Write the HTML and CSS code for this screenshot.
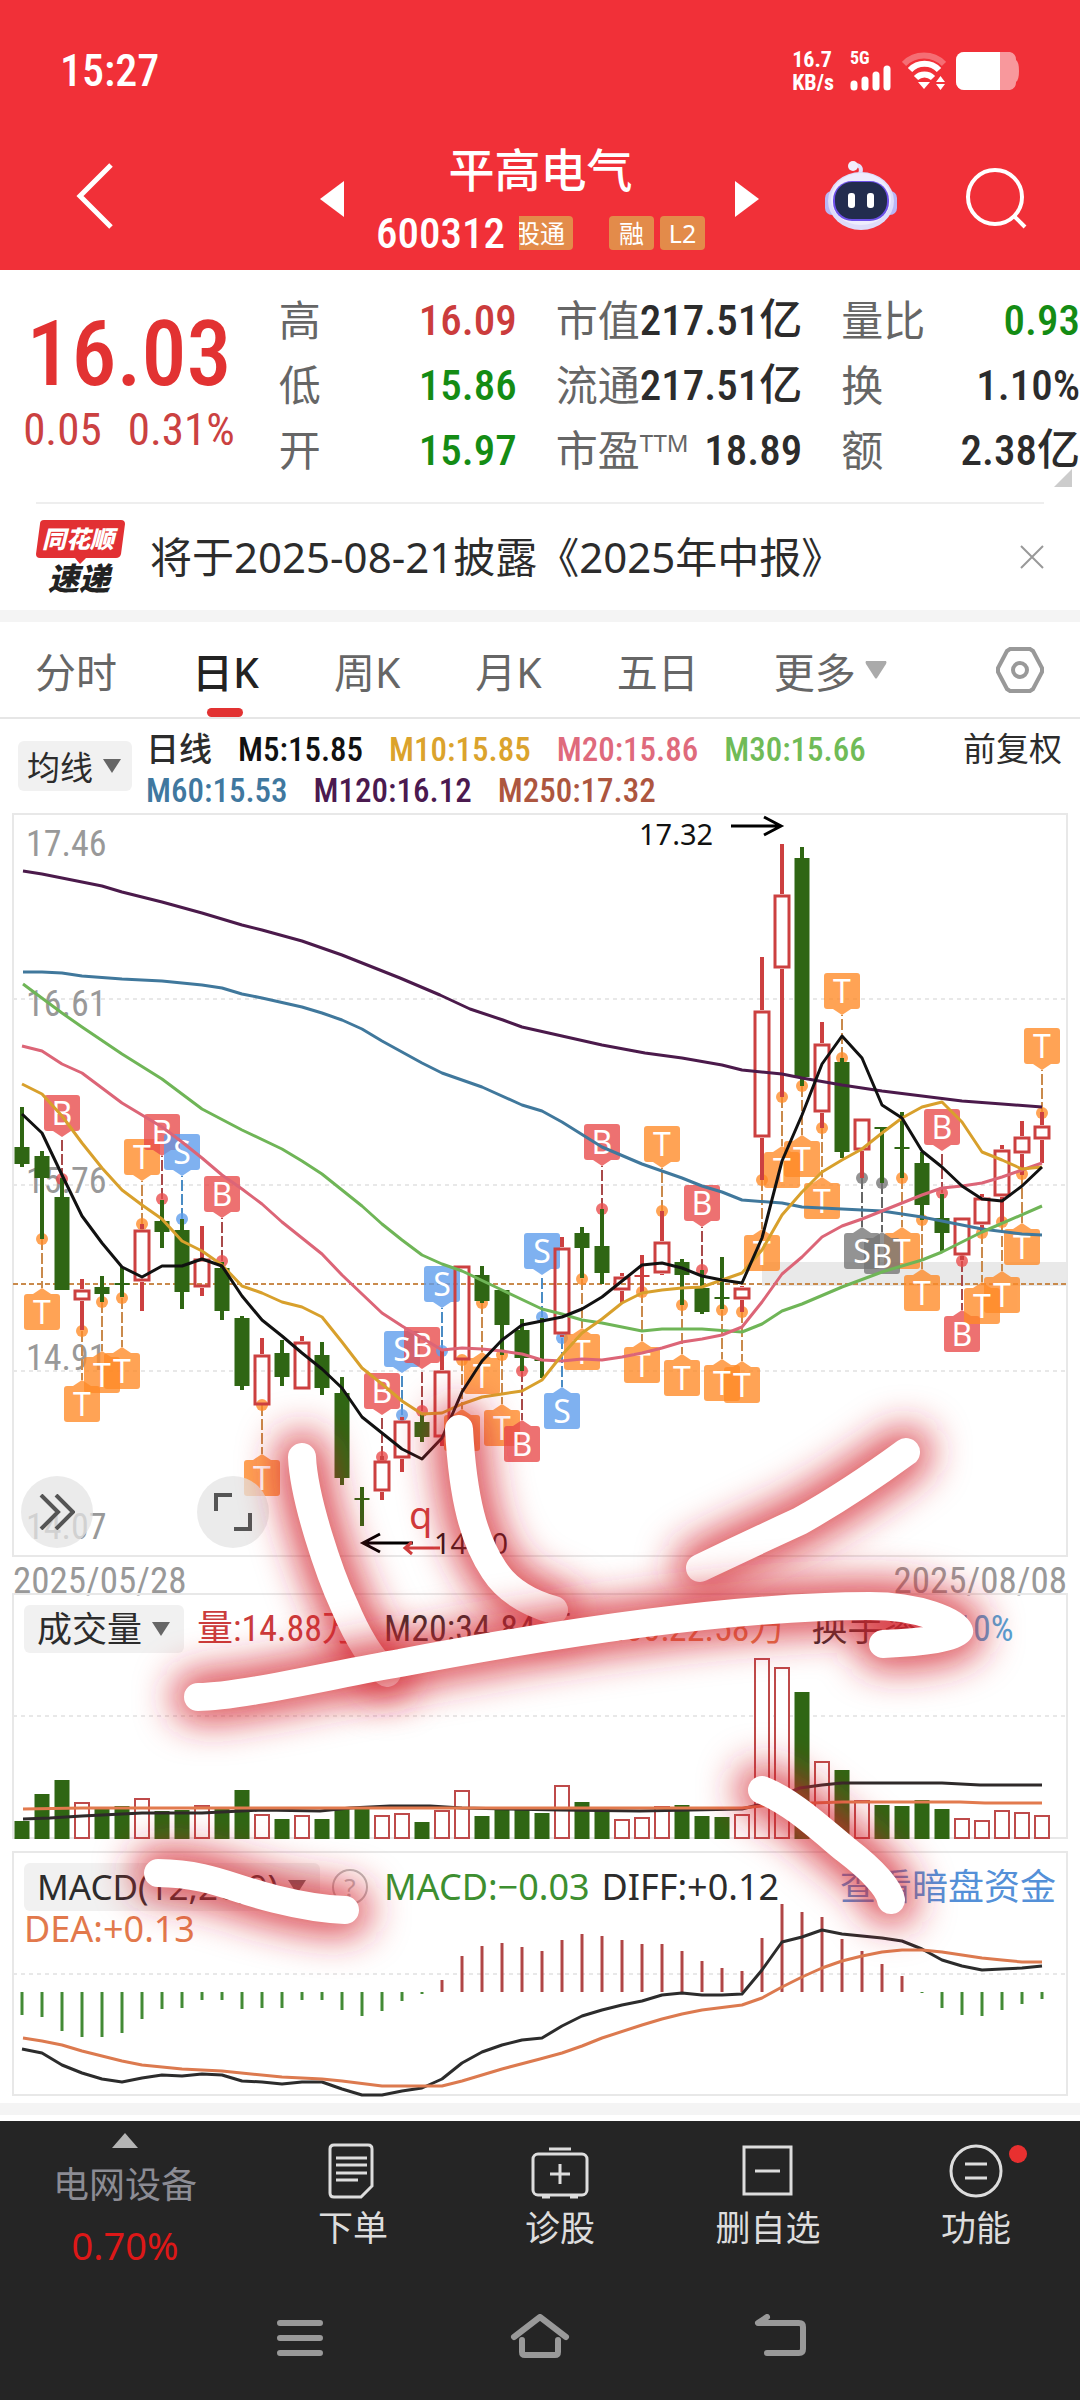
FILE: index.html
```html
<!DOCTYPE html>
<html lang="zh-CN">
<head>
<meta charset="utf-8">
<meta name="viewport" content="width=device-width, initial-scale=1">
<title>平高电气 600312</title>
<link rel="stylesheet" href="styles.css">
</head>
<body>
<header class="top">
  <div class="status">
    <span class="clock">15:27</span>
    <div class="signals">
      <span class="speed">16.7<br>KB/s</span>
      <div class="cell">
        <span>5G</span>
        <svg width="42" height="26" viewBox="0 0 42 26" stroke="#fff" stroke-width="7" stroke-linecap="round"><path d="M4 19v3M15 15v7M26 10v12M37 4v18"/></svg>
      </div>
      <svg class="wifi" width="44" height="38" viewBox="0 0 44 38" fill="none" stroke="#fff" stroke-width="6">
        <path d="M2 12a28 28 0 0 1 40 0" opacity=".3"/><path d="M8 18a20 20 0 0 1 29 0"/><path d="M14 26a12 12 0 0 1 17 0"/>
        <path d="M16 30h12l-6 7z" fill="#fff" stroke="none"/><path d="M34 30h9l-4.500-6zM34 32h9l-4.500 6z" fill="#fff" stroke="none"/>
      </svg>
      <svg width="64" height="38" viewBox="0 0 64 38"><path d="M8 0h46a8 8 0 0 1 6 8q3 2 3 11t-3 11a8 8 0 0 1-6 8H8a8 8 0 0 1-8-8V8a8 8 0 0 1 8-8z" fill="#fff" opacity=".5"/><path d="M8 0h36v38H8a8 8 0 0 1-8-8V8a8 8 0 0 1 8-8z" fill="#fff"/></svg>
    </div>
  </div>
  <div class="titlebar">
    <button class="icon-btn back" aria-label="返回"><svg width="40" height="66" viewBox="0 0 40 66" fill="none" stroke="#fff" stroke-width="5"><path d="M36 2L5 33l31 31"/></svg></button>
    <button class="icon-btn prev" aria-label="上一只"><svg width="24" height="36" viewBox="0 0 24 36"><path d="M24 0v36L0 18z" fill="#fff"/></svg></button>
    <div class="stock">
      <h1>平高电气</h1>
      <div class="code"><span>600312</span><div class="tags"><i class="cut"><b>股通</b></i><i class="tag">融</i><i class="tag">L2</i></div></div>
    </div>
    <button class="icon-btn next" aria-label="下一只"><svg width="24" height="36" viewBox="0 0 24 36"><path d="M0 0v36l24-18z" fill="#fff"/></svg></button>
    <button class="icon-btn robot" aria-label="智能助手">
      <svg width="72" height="70" viewBox="0 0 72 70">
        <path d="M35 13q3-8-4-9" fill="none" stroke="#e4e0fb" stroke-width="4"/><circle cx="28" cy="5" r="5" fill="#f3effd"/>
        <rect x="0" y="30" width="14" height="24" rx="7" fill="#b9b6f5"/><rect x="58" y="30" width="14" height="24" rx="7" fill="#b9b6f5"/>
        <ellipse cx="36" cy="40" rx="33" ry="29" fill="#dedcfa"/><ellipse cx="36" cy="38" rx="30" ry="26" fill="#eeecfd"/>
        <rect x="8" y="20" width="56" height="40" rx="19" fill="#6d50e8"/><rect x="10" y="21" width="52" height="37" rx="17" fill="#222c4e"/>
        <rect x="23" y="32" width="7" height="15" rx="3" fill="#fff"/><rect x="42" y="32" width="7" height="15" rx="3" fill="#fff"/>
      </svg>
    </button>
    <button class="icon-btn search" aria-label="搜索"><svg width="62" height="62" viewBox="0 0 62 62" fill="none" stroke="#fff" stroke-width="4"><circle cx="30" cy="30" r="27"/><path d="M49 49l11 11"/></svg></button>
  </div>
</header>

<main>
<section class="quote">
  <div class="price"><strong>16.03</strong><p><span>0.05</span><span>0.31%</span></p></div>
  <dl>
    <div><dt>高</dt><dd class="up">16.09</dd></div>
    <div><dt>低</dt><dd class="down">15.86</dd></div>
    <div><dt>开</dt><dd class="down">15.97</dd></div>
  </dl>
  <dl>
    <div><dt>市值</dt><dd>217.51亿</dd></div>
    <div><dt>流通</dt><dd>217.51亿</dd></div>
    <div><dt>市盈<sup>TTM</sup></dt><dd>18.89</dd></div>
  </dl>
  <dl>
    <div><dt>量比</dt><dd class="down">0.93</dd></div>
    <div><dt>换</dt><dd>1.10%</dd></div>
    <div><dt>额</dt><dd>2.38亿</dd></div>
  </dl>
  <i class="corner"></i>
</section>

<section class="news">
  <svg width="90" height="74" viewBox="0 0 90 74" class="brand" role="img" aria-label="同花顺速递">
    <path d="M8 0h77q4 0 4 4l-4 30q-1 4-5 4H50l-6 6-5-6H4q-4 0-4-4L4 4q0-4 4-4z" fill="#e23033"/>
    <text x="42" y="28" class="b1">同花顺</text><text x="43" y="70" class="b2">速递</text>
  </svg>
  <a href="#report">将于2025-08-21披露《2025年中报》</a>
  <button class="icon-btn" aria-label="关闭"><svg width="24" height="24" viewBox="0 0 24 24" stroke="#999" stroke-width="2"><path d="M1 1l22 22M23 1L1 23"/></svg></button>
</section>

<nav class="tabs">
  <button>分时</button><button class="on">日K</button><button>周K</button><button>月K</button><button>五日</button>
  <button class="more">更多<svg width="22" height="18" viewBox="0 0 22 18"><path d="M1 0h20q1 1 0 3L12 17q-1 1-2 0L1 3q-1-2 0-3z" fill="#aaa"/></svg></button>
  <button class="set" aria-label="设置"><svg width="50" height="46" viewBox="0 0 50 46" fill="none" stroke="#999" stroke-width="4"><path d="M15 2h20l3 2 9 17v4l-9 17-3 2H15l-3-2L3 25v-4l9-17z"/><circle cx="25" cy="23" r="7"/></svg></button>
</nav>

<section class="legend">
  <button class="pill">均线<i class="caret"></i></button>
  <ul>
    <li>日线</li><li class="m5">M5:15.85</li><li class="m10">M10:15.85</li><li class="m20">M20:15.86</li><li class="m30">M30:15.66</li>
    <li class="m60">M60:15.53</li><li class="m120">M120:16.12</li><li class="m250">M250:17.32</li>
  </ul>
  <button class="plain">前复权</button>
</section>

<section class="charts">
  <div class="panel">
    <svg id="kline" viewBox="0 813 1080 744"></svg>
    <div class="tools">
      <button aria-label="展开"><svg width="36" height="36" viewBox="0 0 36 36" fill="none" stroke="#555" stroke-width="4"><path d="M2 1l17 17L2 35M17 1l17 17-17 17"/></svg></button>
      <button aria-label="全屏"><svg width="38" height="38" viewBox="0 0 38 38" fill="none" stroke="#555" stroke-width="4"><path d="M2 18V2h16M36 20v16H20"/></svg></button>
    </div>
  </div>
  <div class="dates"><time>2025/05/28</time><time>2025/08/08</time></div>
  <div class="panel">
    <svg id="volume" viewBox="0 1593 1080 258"></svg>
    <div class="heads">
      <div class="head vol"><button class="pill">成交量<i class="caret"></i></button>
      <span class="up">量:14.88万</span><span>M20:34.84万</span><span class="orange">M60:22.58万</span><span>换手率:<em>1.10%</em></span></div>
    </div>
  </div>
  <div class="panel">
    <svg id="macd" viewBox="0 1851 1080 252"></svg>
    <div class="heads">
      <div class="head mac"><button class="pill">MACD(12,26,9)<i class="caret"></i></button>
      <svg width="36" height="36" viewBox="0 0 36 36"><circle cx="18" cy="18" r="17" fill="none" stroke="#bbb" stroke-width="2"/><text x="18" y="28">?</text></svg>
      <span class="green">MACD:−0.03</span><span>DIFF:+0.12</span><a href="#fund">查看暗盘资金</a></div>
      <span class="dea">DEA:+0.13</span>
    </div>
  </div>
  <svg class="ink" viewBox="0 813 1080 1290" id="ink" aria-hidden="true"></svg>
</section>
</main>

<footer>
  <div class="actions">
    <button class="sector"><svg width="26" height="15" viewBox="0 0 26 15"><path d="M13 0l13 15H0z" fill="#b5b5b5"/></svg><span>电网设备</span><strong>0.70%</strong></button>
    <button><svg width="58" height="56" viewBox="0 0 58 56"><path d="M10 2h34q4 0 4 4v37L37 54H10q-4 0-4-4V6q0-4 4-4zM12 15h31M12 22h31M12 30h31M12 37h22"/></svg>下单</button>
    <button><svg width="58" height="56" viewBox="0 0 58 56"><rect x="2" y="11" width="54" height="41" rx="5"/><path d="M18 6h22M29 21v20M19 31h20"/><path d="M11 54h8M39 54h8"/></svg>诊股</button>
    <button><svg width="58" height="56" viewBox="0 0 58 56"><rect x="5" y="4" width="47" height="47"/><path d="M16 28h25"/></svg>删自选</button>
    <button><svg width="58" height="56" viewBox="0 0 58 56"><circle cx="29" cy="28" r="25"/><path d="M18 21h22M18 35h22"/></svg>功能<i class="dot"></i></button>
  </div>
  <div class="sysnav">
    <button aria-label="最近"><svg width="60" height="46" viewBox="0 0 60 46"><path d="M10 9h40M10 24h40M10 39h40"/></svg></button>
    <button aria-label="主页"><svg width="60" height="46" viewBox="0 0 60 46"><path d="M4 23L30 3l26 20M12 26v12q0 3 3 3h30q3 0 3-3V26" /></svg></button>
    <button aria-label="返回"><svg width="60" height="46" viewBox="0 0 60 46"><path d="M17 3L8 9h41q4 0 4 4v22q0 4-4 4H17"/></svg></button>
  </div>
</footer>
<script src="chart.js"></script>
</body>
</html>
```

FILE: styles.css
```css
:root {
  --num: "Roboto Condensed", "Liberation Sans Narrow", Roboto, "Noto Sans CJK SC", sans-serif;
  --text: "Noto Sans", "Noto Sans CJK SC", sans-serif;
  --red: #e23232;
  --ink: #2c2c2c;
}
* { box-sizing: border-box; }
body { margin: 0; background: #fff; color: var(--ink); font-family: var(--text); }
button { border: 0; padding: 0; background: none; color: inherit; font: inherit; white-space: nowrap; }
a { color: inherit; text-decoration: none; }
i { font-style: normal; }
svg { display: block; flex: none; }
h1, p, dl, dd, ul { margin: 0; padding: 0; }

.top { background: #f13038; color: #fff; height: 270px; padding-top: 45px; }
.status { display: flex; justify-content: space-between; align-items: center; height: 52px; padding: 0 60px; }
.clock { font: 500 44px/52px var(--num); }
.signals { display: flex; align-items: center; gap: 10px; }
.speed { font: 700 22px/23px var(--num); margin-right: 6px; }
.cell { font: 700 18px/14px var(--num); display: grid; gap: 0; }
.titlebar { display: grid; grid-template-columns: 320px 26px 1fr 26px 64px 76px 64px 62px 53px; align-items: start; padding-top: 44px; }
.back { padding-left: 75px; margin-top: 22px; }
.prev, .next { margin-top: 40px; }
.robot { grid-column: 6; margin-top: 20px; }
.search { grid-column: 8; margin-top: 26px; }
.stock { text-align: center; }
.stock h1 { font: 500 46px/56px var(--text); }
.code { display: flex; justify-content: center; align-items: center; gap: 14px; margin-top: 6px; font: 500 43px/60px var(--num); }
.tags { display: flex; gap: 6px; font: 25px/34px var(--text); }
.tags i { height: 34px; background: #e38b4a; border-radius: 4px; white-space: nowrap; }
.tags .cut { width: 54px; display: flex; justify-content: flex-end; overflow: hidden; border-radius: 0 4px 4px 0; padding-right: 8px; margin-right: 30px; }
.tags b { font-weight: 400; }
.tag { width: 45px; }

.quote { position: relative; display: grid; grid-template-columns: 242fr 240fr 240fr 241fr; column-gap: 39px; height: 232px; padding-top: 17px; }
.price { color: var(--red); font-family: var(--num); padding-left: 18px; text-align: center; }
.price strong { display: block; font-size: 90px; font-weight: 500; line-height: 100px; margin-top: 18px; }
.price p { display: flex; justify-content: center; gap: 26px; color: #cb4141; font-size: 45px; line-height: 48px; margin-top: 1px; }
.quote dl div { display: flex; justify-content: space-between; align-items: center; height: 65px; white-space: nowrap; }
.quote dt { color: #666; font-size: 42px; line-height: 60px; }
.quote sup { font-size: 24px; line-height: 0; vertical-align: 14px; }
.quote dd { font: 500 43px/60px var(--num); }
.up { color: #cb3c3c; }
.quote .down { color: #148c14; }
.corner { position: absolute; right: 8px; bottom: 15px; border: solid transparent; border-width: 0 0 18px 18px; border-bottom-color: #ccc; }

.news { display: flex; align-items: center; margin: 0 36px; height: 108px; border-top: 2px solid #eee; }
.news a { flex: 1; padding-left: 24px; font-size: 42px; line-height: 60px; }
.brand text { font-family: "Noto Sans CJK SC", sans-serif; font-weight: 900; font-style: italic; text-anchor: middle; }
.b1 { font-size: 24px; fill: #fff; }
.b2 { font-size: 31px; fill: #222; }

.tabs { display: flex; gap: 75px; height: 109px; padding: 0 35px; border-top: 12px solid #f4f4f4; border-bottom: 2px solid #e6e6e6; color: #666; font-size: 41px; }
.tabs button { display: flex; align-items: center; position: relative; }
.tabs .on { color: #222; font-weight: 500; }
.tabs .on::after { content: ""; position: absolute; left: 50%; bottom: 0; width: 36px; height: 9px; margin-left: -18px; border-radius: 5px; background: var(--red); }
.tabs .more { gap: 9px; }
.tabs .set { margin-left: auto; }

.legend { display: flex; height: 94px; padding: 10px 18px 0; font-size: 33px; }
.pill { display: flex; align-items: center; gap: 10px; background: #f1f1f1; border-radius: 6px; }
.legend .pill { height: 50px; padding: 0 11px 0 9px; margin-top: 12px; }
.caret { border: solid transparent; border-width: 14px 9px 0; border-top-color: #666; }
.legend ul { flex: 1; display: flex; flex-wrap: wrap; column-gap: 26px; margin-left: 14px; list-style: none; font: 500 33px/41px var(--num); align-content: flex-start; }
.m5 { color: #111; } .m10 { color: #dba32c; } .m20 { color: #df6a7c; } .m30 { color: #70bb57; }
.m60 { color: #40789f; } .m120 { color: #4b1a4f; } .m250 { color: #ad563f; }
.plain { align-self: flex-start; line-height: 40px; }

.charts { position: relative; border-bottom: 12px solid #f4f4f4; margin-bottom: 6px; }
.panel { position: relative; }
.panel > svg { width: 100%; height: auto; }
.tools { position: absolute; left: 21px; bottom: 9px; display: flex; gap: 104px; }
.tools button { width: 72px; height: 72px; border-radius: 50%; background: rgba(228, 228, 228, .75); display: grid; place-items: center; }
.dates { display: flex; justify-content: space-between; height: 36px; padding: 0 13px; color: #999; font: 37px/48px var(--num); }
.heads { position: absolute; inset: 12px 24px auto 24px; }
.head { display: flex; align-items: center; white-space: nowrap; font: 36px/48px var(--num); }
.head .pill { font-family: var(--text); height: 48px; padding: 0 14px 0 13px; font-size: 35px; }
.vol { gap: 13px; }
.vol em { font-style: normal; color: #52a3d6; }
.vol span + span { margin-left: 13px; }
.orange, .dea { color: #e2794c; }
.mac { gap: 12px; font-family: var(--text); }
.mac text { font: 26px var(--text); fill: #bbb; text-anchor: middle; }
.mac .green { color: #3d8f30; margin-left: 4px; }
.mac a { color: #5490d8; margin-left: auto; }
.dea { display: block; font: 36px/36px var(--text); }
.ink { position: absolute; inset: 0; width: 100%; height: auto; pointer-events: none; }

.axis { font: 36px var(--num); fill: #999; }
.mark { font: 32px var(--text); fill: #fff; text-anchor: middle; }
.note { font: 29px var(--text); fill: #111; }
.q { font: 38px var(--text); fill: #cf3c3c; }

footer { background: #252525; color: #ddd; height: 279px; }
.actions { display: grid; grid-template-columns: 250fr 206fr 208fr 208fr 208fr; height: 168px; }
.actions button { position: relative; display: flex; flex-direction: column; align-items: center; padding-top: 22px; font-size: 35px; line-height: 58px; }
.actions svg { fill: none; stroke: #ddd; stroke-width: 3; }
.actions .sector { padding-top: 12px; color: #8c8c94; line-height: 60px; font-size: 36px; }
.actions .sector svg { stroke: none; margin-bottom: 7px; }
.sector strong { color: #dd1818; font-weight: 400; font-size: 38px; }
.dot { position: absolute; top: 24px; right: 53px; width: 18px; height: 18px; border-radius: 50%; background: #e83030; }
.sysnav { display: flex; justify-content: center; gap: 180px; padding-top: 25px; }
.sysnav svg { fill: none; stroke: #999; stroke-width: 6; stroke-linecap: round; stroke-linejoin: round; }
```

FILE: chart.js
```js
const X = i => 22 + 20 * i;
const RED = '#cc4040', GREEN = '#2f6613';
const put = (id, html) => { document.getElementById(id).innerHTML = html; };
const frame = (y, h, grids) => `<rect x="13" y="${y}" width="1054" height="${h}" fill="none" stroke="#e8e8e8" stroke-width="2"/>` +
  grids.map(g => `<path d="M13 ${g}H1066" stroke="#e8e8e8" stroke-width="2" stroke-dasharray="4 4"/>`).join('');
const line = (pts, c, w = 3) => `<polyline points="${pts}" fill="none" stroke="${c}" stroke-width="${w}" stroke-linejoin="round"/>`;
// y values for consecutive days
const daily = ys => ys.map((y, i) => `${X(i)},${y}`).join(' ');

// direction, high, body top, body bottom, low
const candles = `G 1107 1147 1164 1167|G 1151 1156 1178 1239|G 1178 1197 1290 1290|R 1279 1289 1301 1330|G 1276 1287 1294 1302|G 1267 1283 1285 1297|R 1224 1229 1282 1311|G 1200 1221 1232 1248|G 1219 1230 1292 1309|R 1226 1258 1288 1296|G 1262 1268 1311 1320|G 1316 1318 1386 1390|R 1338 1354 1406 1406|G 1340 1353 1377 1386|R 1336 1341 1390 1390|G 1342 1355 1388 1395|G 1377 1393 1478 1485|G 1487 1498 1500 1526|R 1456 1460 1492 1500|R 1417 1420 1459 1472|G 1413 1422 1437 1442|R 1350 1370 1438 1446|R 1265 1265 1361 1361|G 1266 1275 1301 1303|G 1290 1290 1325 1355|G 1319 1330 1358 1371|G 1318 1359 1361 1378|R 1237 1247 1335 1337|G 1227 1233 1248 1278|G 1209 1246 1273 1284|R 1273 1276 1291 1303|R 1255 1275 1277 1292|R 1211 1241 1274 1275|G 1259 1262 1275 1305|G 1270 1288 1312 1314|G 1257 1297 1299 1309|R 1286 1287 1300 1312|R 957 1010 1138 1180|R 844 894 969 1097|G 847 858 1077 1086|R 1022 1043 1113 1128|G 1058 1062 1152 1158|R 1118 1118 1151 1178|G 1127 1127 1129 1183|G 1112 1147 1149 1178|G 1152 1163 1205 1220|G 1194 1218 1233 1252|R 1217 1217 1256 1260|R 1194 1197 1225 1233|R 1145 1149 1197 1222|R 1121 1136 1154 1175|R 1112 1125 1140 1163`
  .split('|').map(s => { const [d, ...v] = s.split(' '); return [d, ...v.map(Number)]; });
const candle = ([d, h, t, b, l], i) => {
  const x = X(i), c = d === 'R' ? RED : GREEN;
  const wick = `<path d="M${x} ${h}V${t}M${x} ${b}V${l}" stroke="${c}" stroke-width="4"/>`;
  if (d === 'G' || b - t < 4) return wick + `<rect x="${x - 7.5}" y="${t}" width="15" height="${b - t}" fill="${c}"/>`;
  return wick + `<rect x="${x - 7}" y="${t + 2}" width="14" height="${b - t - 4}" fill="none" stroke="${c}" stroke-width="3"/>`;
};

// day, letter, top of the box, y of the dot, grey flag
const marks = [[1,'T',1294,1239],[2,'B',1095,1179],[3,'T',1386,1331],[4,'T',1357,1302],[5,'T',1353,1298],[6,'T',1139,1224],[7,'B',1114,1199],[8,'S',1134,1219],[10,'B',1176,1261],[12,'T',1460,1405],[18,'B',1373,1457],[19,'S',1331,1415],[20,'B',1327,1411],[21,'S',1266,1351],[22,'T',1415,1360],[23,'T',1358,1303],[24,'T',1410,1355],[25,'B',1426,1371],[26,'S',1233,1317],[27,'S',1393,1338],[28,'T',1334,1279],[29,'B',1124,1209],[31,'T',1347,1292],[32,'T',1126,1211],[33,'T',1360,1305],[34,'B',1185,1270],[35,'T',1365,1310],[36,'T',1367,1312],[37,'T',1235,1180],[38,'T',1152,1097],[39,'T',1141,1086],[40,'T',1183,1128],[41,'T',973,1058],[44,'T',1233,1178],[42,'S',1233,1178,1],[43,'B',1238,1183,1],[45,'T',1275,1220],[46,'B',1109,1193],[47,'B',1316,1261],[48,'T',1288,1233],[49,'T',1277,1222],[50,'T',1229,1174],[51,'T',1028,1113]];
const tint = { T: ['#ff8a26', '#c98a4c'], B: ['#e94a4a', '#a84a4a'], S: ['#5c9cec', '#4a8cc4'] };
const mark = ([i, k, t, dot, grey]) => {
  const x = X(i), [c, d] = grey ? ['#757575', '#666'] : tint[k];
  const above = t < dot;
  const tip = above ? `M${x - 9} ${t + 36}h18l-9 6z` : `M${x - 9} ${t}h18l-9-6z`;
  const from = above ? t + 42 : t - 6;
  return `<path d="M${x} ${dot}V${from}" stroke="${d}" stroke-width="2" stroke-dasharray="11 3"/><circle cx="${x}" cy="${dot}" r="6" fill="${c}" opacity=".78"/>` +
    `<g opacity=".78"><rect x="${x - 18}" y="${t}" width="36" height="36" rx="3" fill="${c}"/><path d="${tip}" fill="${c}"/></g>`;
};
const letter = ([i, k, t]) => `<text class="mark" x="${X(i)}" y="${t + 30}">${k}</text>`;

const ma120 = '23,871 42,874 62,878 102,886 122,892 162,902 202,913 242,925 262,930 302,941 342,955 400,978 440,995 470,1009 503,1020 522,1027 562,1036 602,1045 645,1053 682,1058 722,1065 742,1070 782,1074 802,1078 842,1085 882,1091 922,1096 962,1101 1002,1104 1042,1107';
const ma60 = '23,972 42,972 62,973 82,976 122,979 162,981 202,985 222,988 242,994 262,998 302,1007 322,1013 342,1020 362,1029 382,1041 422,1063 442,1073 482,1087 522,1105 542,1111 562,1122 602,1147 642,1164 682,1178 702,1186 722,1192 742,1200 782,1203 802,1207 882,1211 922,1217 962,1225 982,1229 1022,1234 1042,1235';
const ma30 = '23,984 62,1013 82,1027 122,1054 162,1079 202,1109 242,1130 282,1149 302,1161 322,1174 342,1190 362,1206 382,1224 402,1240 422,1255 442,1264 462,1271 502,1290 542,1309 562,1314 582,1320 602,1323 642,1331 662,1329 702,1329 742,1332 762,1324 782,1311 802,1304 842,1287 882,1272 922,1260 942,1252 982,1232 1042,1206';
const ma20 = daily([1046,1051,1064,1073,1088,1103,1115,1127,1142,1158,1175,1189,1204,1222,1238,1254,1275,1294,1313,1326,1338,1350,1348,1349,1351,1354,1360,1361,1359,1360,1357,1353,1348,1342,1339,1335,1327,1302,1274,1257,1237,1226,1219,1211,1203,1195,1188,1186,1183,1177,1170,1163]);
const ma10 = daily([1084,1094,1116,1143,1168,1190,1205,1219,1241,1251,1265,1286,1293,1302,1307,1317,1342,1368,1384,1401,1414,1413,1404,1397,1394,1391,1380,1355,1333,1319,1303,1293,1290,1288,1287,1280,1273,1250,1215,1192,1172,1160,1149,1133,1118,1107,1102,1122,1152,1160,1169,1167]);
const ma5 = daily([1114,1133,1175,1216,1243,1267,1277,1266,1266,1259,1266,1296,1320,1336,1353,1369,1388,1417,1433,1449,1459,1438,1392,1361,1340,1325,1321,1317,1309,1297,1281,1265,1263,1268,1276,1280,1283,1238,1161,1115,1064,1036,1058,1105,1118,1151,1167,1186,1199,1201,1186,1167]);

put('kline', frame(814, 742, [999, 1185, 1371]) +
  '<rect x="762" y="1262" width="304" height="24" fill="#e9e9e9"/>' +
  '<path d="M13 1284H1066" stroke="#c98a4c" stroke-width="2" stroke-dasharray="5 3"/>' +
  [['17.46', 856], ['16.61', 1016], ['15.76', 1193], ['14.91', 1370], ['14.07', 1539]].map(([t, y]) => `<text class="axis" x="26" y="${y}">${t}</text>`).join('') +
  marks.map(mark).join('') + marks.map(letter).join('') + candles.map(candle).join('') +
  line(ma120, '#4b1a4b') + line(ma60, '#40789c') + line(ma30, '#6fb557') + line(ma20, '#dc6577') + line(ma10, '#d8a02c') + line(ma5, '#111') +
  '<text class="note" x="639" y="845">17.32</text><path d="M731 826h50M764 817l17 9-17 9M413 1543h-49M380 1534l-17 9 17 9" fill="none" stroke="#000" stroke-width="3"/>' +
  '<text class="q" x="409" y="1529">q</text><path d="M440 1548h-34M412 1542l-7 6 7 6" fill="none" stroke="#cf3c3c" stroke-width="3"/>' +
  '<text class="note" x="434" y="1554">14.20</text>');

const vol = [1821,1794,1780,1802,1809,1806,1798,1811,1810,1805,1809,1790,1814,1819,1815,1819,1809,1809,1815,1813,1822,1810,1790,1816,1810,1810,1813,1785,1802,1809,1819,1817,1806,1805,1816,1817,1814,1658,1667,1692,1761,1770,1800,1805,1806,1800,1809,1818,1820,1810,1812,1815];
put('volume', frame(1594, 244, [1716]) + vol.map((t, i) => candles[i][0] === 'G'
  ? `<rect x="${X(i) - 7.5}" y="${t}" width="15" height="${1839 - t}" fill="${GREEN}"/>`
  : `<rect x="${X(i) - 7}" y="${t + 1}" width="14" height="${1837 - t}" fill="#fff" stroke="#be4a4a" stroke-width="2"/>`).join('') +
  line('23,1819 50,1818 82,1816 142,1813 202,1813 262,1810 320,1811 350,1808 390,1806 430,1806 462,1808 560,1810 640,1811 742,1809 762,1804 800,1788 822,1785 842,1783 942,1783 980,1785 1042,1785', '#2e2a2a') +
  line('23,1809 82,1808 742,1808 762,1806 782,1804 842,1802 960,1802 985,1803 1042,1803', '#e27a4e'));

const bars = [2015,2017,2031,2037,2037,2033,2019,2009,2008,2000,2000,2009,2008,2008,2000,2000,2010,2016,2011,2001,1994,1980,1956,1946,1943,1947,1951,1940,1934,1936,1940,1944,1944,1951,1961,1968,1971,1938,1904,1912,1917,1939,1951,1964,1976,1993,2008,2015,2016,2010,2004,1999];
put('macd', frame(1852, 243, [1974]) + bars.map((y, i) => `<path d="M${X(i)} 1992V${y}" stroke="${y < 1992 ? '#b04646' : '#438a35'}" stroke-width="3"/>`).join('') +
  line(daily([2049,2053,2065,2073,2079,2082,2078,2075,2076,2074,2075,2081,2082,2084,2082,2082,2089,2095,2095,2091,2088,2079,2063,2052,2045,2040,2038,2026,2016,2010,2005,2001,1995,1993,1995,1995,1994,1970,1942,1937,1930,1934,1936,1938,1941,1949,1960,1966,1970,1969,1968,1966]), '#2c2c2c') +
  line('23,2038 42,2041 62,2045 82,2051 102,2056 122,2061 142,2065 182,2069 222,2071 282,2077 322,2079 342,2081 382,2086 442,2086 462,2081 502,2069 540,2059 562,2053 582,2046 602,2038 642,2025 662,2019 682,2014 702,2010 742,2005 762,1998 782,1987 802,1977 822,1968 842,1961 862,1956 882,1952 902,1950 922,1950 942,1952 982,1958 1002,1960 1022,1962 1042,1962', '#dc7a4f'));

// glowing marker strokes, oldest first
const strokes = ['M302 1457C304 1500 330 1575 344 1605Q365 1655 387 1673', 'M459 1429C463 1500 474 1540 494 1570Q512 1598 554 1610',
  'M700 1568Q750 1544 800 1521Q850 1493 906 1452', 'M158 1873C210 1874 230 1888 275 1899Q315 1909 345 1910', 'M762 1790C790 1801 815 1824 845 1849Q888 1882 891 1900',
  'M198 1697C240 1697 340 1673 400 1663Q700 1606 870 1606C920 1606 955 1622 959 1631Q950 1641 883 1644'];
put('ink', '<filter id="glow" filterUnits="userSpaceOnUse" x="0" y="1300" width="1080" height="803"><feGaussianBlur stdDeviation="19"/></filter>' +
  strokes.map(d => `<g fill="none" stroke-linecap="round" stroke-linejoin="round"><path d="${d}" stroke="#d42430" stroke-opacity=".85" stroke-width="50" filter="url(#glow)"/><path d="${d}" stroke="#fff" stroke-width="28"/></g>`).join(''));
```
